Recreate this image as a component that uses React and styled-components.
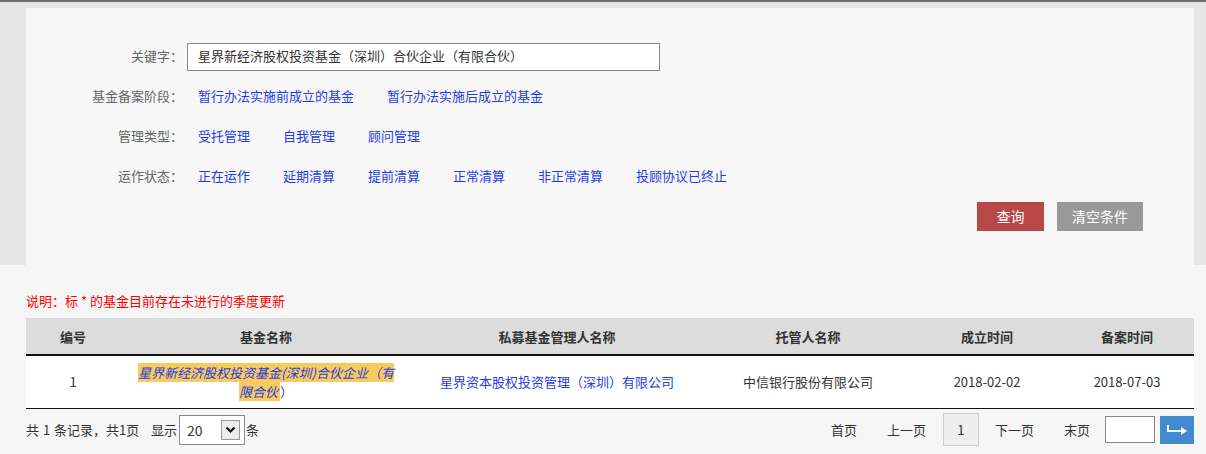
import styled, { createGlobalStyle } from 'styled-components';

const GlobalStyle = createGlobalStyle`
  html, body {
    margin: 0;
    padding: 0;
    background: #f6f6f6;
    font-family: "Noto Sans CJK SC", "Liberation Sans", sans-serif;
    font-size: 13px;
    color: #333;
  }
  * { box-sizing: border-box; }
`;

const Page = styled.div`
  width: 1206px;
  height: 454px;
  border-top: 2px solid #707070;
  overflow: hidden;
`;

const Top = styled.div`
  background: #e6e6e6;
  padding: 6px 12px 0 26px;
`;

const Panel = styled.div`
  background: #f7f7f7;
  height: 257px;
  padding: 29px 51px 0 0;
`;

const Row = styled.div`
  display: flex;
  align-items: center;
  height: 40px;
`;

const Label = styled.div`
  width: 157px;
  text-align: right;
  color: #666;
  flex-shrink: 0;
  padding-bottom: 4px;
`;

const KeywordInput = styled.div`
  margin-left: 4px;
  width: 473px;
  height: 28px;
  border: 1px solid #888;
  background: #fff;
  padding: 0 0 3px 10px;
  display: flex;
  align-items: center;
  color: #333;
`;

const Options = styled.div`
  display: flex;
  padding: 0 0 4px 15px;
  gap: 33px;
`;

const OptionLink = styled.a`
  color: #1f3ce6;
  text-decoration: none;
  cursor: pointer;
`;

const Buttons = styled.div`
  display: flex;
  justify-content: flex-end;
  gap: 13px;
  margin-top: 5px;
`;

const Btn = styled.button`
  border: none;
  height: 29px;
  width: ${p => p.$w}px;
  background: ${p => p.$bg};
  color: #fff;
  font-family: inherit;
  font-size: 14px;
  padding: 0 0 2px;
  cursor: pointer;
`;

const Content = styled.div`
  margin-left: 26px;
  width: 1168px;
`;

const Note = styled.div`
  color: #f00;
  height: 53px;
  padding-top: 26px;
`;

const Table = styled.table`
  width: 1168px;
  border-collapse: collapse;
  table-layout: fixed;
`;

const Th = styled.th`
  background: #dcdcdc;
  height: 37px;
  font-weight: bold;
  color: #333;
  border-bottom: 2px solid #111;
  padding: 0;
`;

const Td = styled.td`
  background: #fff;
  height: 53px;
  text-align: center;
  padding: 0 ${p => p.$pad || 0}px;
  line-height: 19px;
  border-bottom: 1px solid #111;
`;

const BlueLink = styled.a`
  color: #1f3ce6;
  text-decoration: none;
`;

const Mark = styled.em`
  background: #f9cb5c;
  font-style: italic;
  padding-right: 2px;
`;

const Pager = styled.div`
  display: flex;
  align-items: center;
  justify-content: space-between;
  height: 42px;
`;

const Summary = styled.div`
  display: flex;
  align-items: center;
  color: #333;
  word-spacing: 1px;
`;

const SelectBox = styled.div`
  display: flex;
  align-items: center;
  justify-content: space-between;
  width: 66px;
  height: 30px;
  margin: 0 1px 0 2px;
  border: 1px solid #888;
  background: #fff;
  padding: 0 4px 0 7px;
  font-size: 14px;
`;

const Arrow = styled.span`
  width: 19px;
  height: 20px;
  border: 1px solid #999;
  background: #ececec;
  display: flex;
  align-items: center;
  justify-content: center;
`;

const Nav = styled.div`
  display: flex;
  align-items: center;
`;

const PageLink = styled.a`
  padding: 0 15px;
  color: #333;
  cursor: pointer;
`;

const Current = styled.span`
  width: 36px;
  height: 33px;
  margin: 0 1px 0 2px;
  background: #eee;
  border: 1px solid #ccc;
  display: flex;
  align-items: center;
  justify-content: center;
`;

const JumpInput = styled.div`
  width: 50px;
  height: 27px;
  border: 1px solid #888;
  background: #fff;
`;

const GoBtn = styled.button`
  width: 34px;
  height: 28px;
  margin-left: 5px;
  border: none;
  background: #428bd0;
  display: flex;
  align-items: center;
  justify-content: center;
  padding: 0;
`;

const cols = [94, 292, 290, 212, 146, 134];

export default function App() {
  return (
    <Page>
      <GlobalStyle />
      <Top>
        <Panel>
          <Row>
            <Label>关键字：</Label>
            <KeywordInput>星界新经济股权投资基金（深圳）合伙企业（有限合伙）</KeywordInput>
          </Row>
          <Row>
            <Label>基金备案阶段：</Label>
            <Options>
              <OptionLink>暂行办法实施前成立的基金</OptionLink>
              <OptionLink>暂行办法实施后成立的基金</OptionLink>
            </Options>
          </Row>
          <Row>
            <Label>管理类型：</Label>
            <Options>
              <OptionLink>受托管理</OptionLink>
              <OptionLink>自我管理</OptionLink>
              <OptionLink>顾问管理</OptionLink>
            </Options>
          </Row>
          <Row>
            <Label>运作状态：</Label>
            <Options>
              <OptionLink>正在运作</OptionLink>
              <OptionLink>延期清算</OptionLink>
              <OptionLink>提前清算</OptionLink>
              <OptionLink>正常清算</OptionLink>
              <OptionLink>非正常清算</OptionLink>
              <OptionLink>投顾协议已终止</OptionLink>
            </Options>
          </Row>
          <Buttons>
            <Btn $w={67} $bg="#b84846">查询</Btn>
            <Btn $w={86} $bg="#999">清空条件</Btn>
          </Buttons>
        </Panel>
      </Top>
      <Content>
        <Note>说明：标 * 的基金目前存在未进行的季度更新</Note>
        <Table>
          <colgroup>
            {cols.map((w, i) => <col key={i} style={{ width: w }} />)}
          </colgroup>
          <thead>
            <tr>
              <Th>编号</Th>
              <Th>基金名称</Th>
              <Th>私募基金管理人名称</Th>
              <Th>托管人名称</Th>
              <Th>成立时间</Th>
              <Th>备案时间</Th>
            </tr>
          </thead>
          <tbody>
            <tr>
              <Td>1</Td>
              <Td $pad={14}>
                <BlueLink>
                  <Mark>星界新经济股权投资基金(深圳)合伙企业（有限合伙</Mark>）
                </BlueLink>
              </Td>
              <Td><BlueLink>星界资本股权投资管理（深圳）有限公司</BlueLink></Td>
              <Td>中信银行股份有限公司</Td>
              <Td>2018-02-02</Td>
              <Td>2018-07-03</Td>
            </tr>
          </tbody>
        </Table>
        <Pager>
          <Summary>
            共 1 条记录，共1页&nbsp;&nbsp;&nbsp;显示
            <SelectBox>
              20
              <Arrow>
                <svg width="11" height="8" viewBox="0 0 11 8">
                  <path d="M1.5 1.5 L5.5 5.5 L9.5 1.5" fill="none" stroke="#111" strokeWidth="2.2" />
                </svg>
              </Arrow>
            </SelectBox>
            条
          </Summary>
          <Nav>
            <PageLink>首页</PageLink>
            <PageLink>上一页</PageLink>
            <Current>1</Current>
            <PageLink>下一页</PageLink>
            <PageLink>末页</PageLink>
            <JumpInput />
            <GoBtn>
              <svg width="22" height="12" viewBox="0 0 22 12">
                <path d="M2 1 V7 H16" fill="none" stroke="#fff" strokeWidth="2" />
                <path d="M15 3 L21 7 L15 11 Z" fill="#fff" />
              </svg>
            </GoBtn>
          </Nav>
        </Pager>
      </Content>
    </Page>
  );
}
